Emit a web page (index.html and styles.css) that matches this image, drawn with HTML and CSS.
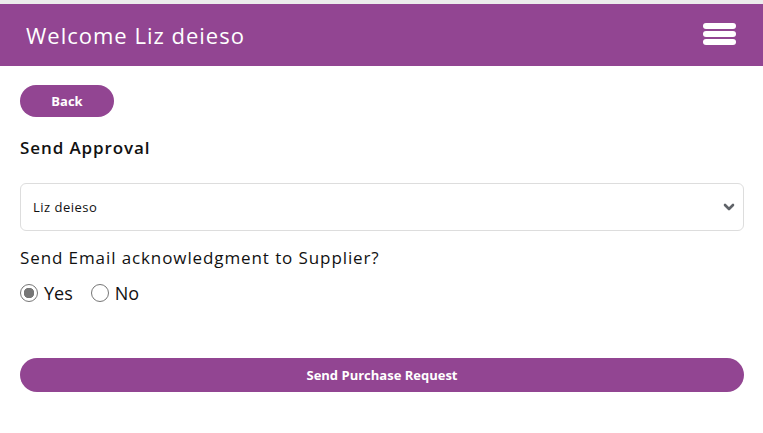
FILE: index.html
```html
<!DOCTYPE html>
<html lang="en">
<head>
    <meta charset="UTF-8">
    <title>Send Approval</title>
    <link rel="stylesheet" href="styles.css">
</head>
<body>
    <div class="topline"></div>
    <header class="header">
        <h1 class="title">Welcome Liz deieso</h1>
        <div class="burger">
            <span></span>
            <span></span>
            <span></span>
        </div>
    </header>
    <main class="content">
        <button type="button" class="btn back">Back</button>
        <h2 class="section-title">Send Approval</h2>
        <div class="select">
            <span>Liz deieso</span>
            <svg width="12" height="8" viewBox="0 0 12 8"><path d="M2 2 L6 6 L10 2" fill="none" stroke="#5f6368" stroke-width="2.6" stroke-linecap="round" stroke-linejoin="round"/></svg>
        </div>
        <p class="question">Send Email acknowledgment to Supplier?</p>
        <div class="radios">
            <label class="radio"><span class="dot checked"></span>Yes</label>
            <label class="radio"><span class="dot"></span>No</label>
        </div>
        <button type="button" class="btn submit">Send Purchase Request</button>
    </main>
</body>
</html>
```

FILE: styles.css
```css
body {
    margin: 0;
    font-family: "Open Sans", "Liberation Sans", sans-serif;
    color: #111;
    background: #fff;
}
.topline {
    height: 4px;
    background-color: #ececec;
}
.header {
    height: 62px;
    background-color: #924592;
    display: flex;
    align-items: center;
    justify-content: space-between;
    padding: 0 27px 0 26px;
}
.title {
    margin: 0;
    color: #fff;
    font-weight: 400;
    font-size: 22px;
    letter-spacing: 1px;
}
.burger {
    display: flex;
    flex-direction: column;
    gap: 2px;
    margin-top: -2px;
}
.burger span {
    display: block;
    width: 33px;
    height: 6px;
    border-radius: 3px;
    background: #fff;
}
.content {
    padding: 19px 19px 0 20px;
}
.btn {
    border: none;
    background-color: #924592;
    color: #fff;
    font-family: "Open Sans", "Liberation Sans", sans-serif;
    font-weight: 700;
    font-size: 13px;
    border-radius: 20px;
}
.back {
    width: 94px;
    height: 32px;
    display: block;
}
.section-title {
    margin: 19px 0 0;
    font-size: 17px;
    font-weight: 600;
    letter-spacing: 0.9px;
}
.select {
    margin-top: 24px;
    height: 46px;
    border: 1px solid #ddd;
    border-radius: 6px;
    display: flex;
    align-items: center;
    justify-content: space-between;
    padding: 0 8px 0 12px;
    font-size: 13px;
    letter-spacing: 0.5px;
}
.question {
    margin: 15px 0 0;
    font-size: 17px;
    letter-spacing: 0.9px;
}
.radios {
    display: flex;
    gap: 18px;
    margin-top: 12px;
    font-size: 18px;
}
.radio {
    display: flex;
    align-items: center;
    gap: 6px;
}
.dot {
    width: 18px;
    height: 18px;
    border: 1px solid #767676;
    border-radius: 50%;
    box-sizing: border-box;
    background: #fff;
}
.dot.checked {
    background: radial-gradient(circle, #767676 0 5px, #fff 5.5px);
}
.submit {
    display: block;
    width: 100%;
    height: 34px;
    margin-top: 53px;
}
```
